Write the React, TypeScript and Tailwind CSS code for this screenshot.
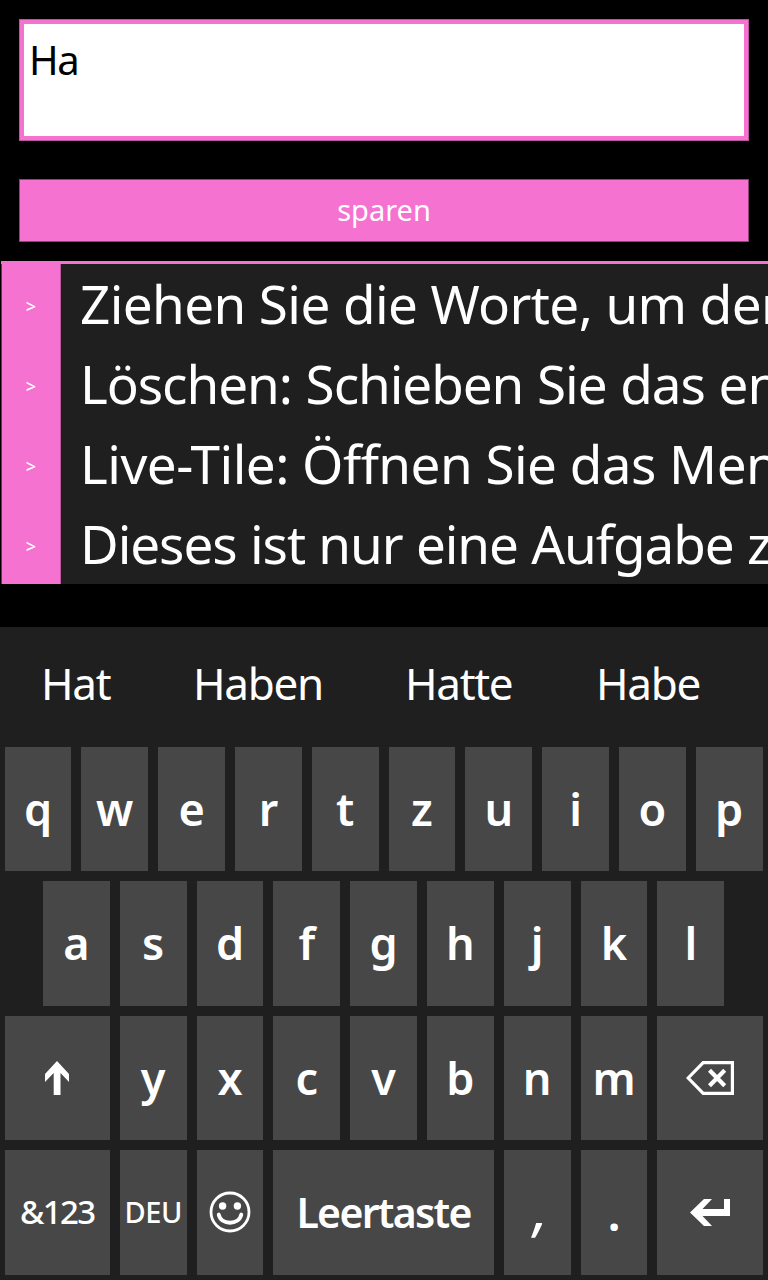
import type { ReactNode } from 'react';

const tasks = [
  { text: 'Ziehen Sie die Worte, um den', style: 'tracking-[-0.6px]' },
  { text: 'Löschen: Schieben Sie das en', style: 'tracking-[-1.05px] [word-spacing:1px]' },
  { text: 'Live-Tile: Öffnen Sie das Men', style: 'tracking-[-0.53px]' },
  { text: 'Dieses ist nur eine Aufgabe z', style: 'tracking-[-1.05px] [word-spacing:0.6px]' },
];

const suggestions = [
  { word: 'Hat', style: 'w-[152px]' },
  { word: 'Haben', style: 'w-[212px]' },
  { word: 'Hatte', style: 'w-[191px]' },
  { word: 'Habe', style: 'w-[140px]' },
];

function Key({ children, className = 'col-span-2' }: { children: ReactNode; className?: string }) {
  return (
    <button
      type="button"
      className={`flex h-full items-center justify-center whitespace-nowrap bg-[#474747] text-[45px] leading-none font-semibold text-white ${className}`}
    >
      {children}
    </button>
  );
}

function Letters({ letters }: { letters: string }) {
  return (
    <>
      {letters.split('').map((letter) => (
        <Key key={letter} className="col-span-2 pb-[2px]">
          {letter}
        </Key>
      ))}
    </>
  );
}

function ShiftIcon() {
  return (
    <svg width="24" height="34" viewBox="0 0 24 34" fill="white">
      <path d="M12 0 24 13V21L15.5 12V34H8.7V12L0 21V13Z" />
    </svg>
  );
}

function BackspaceIcon() {
  return (
    <svg width="48" height="34" viewBox="0 0 48 34" fill="none" stroke="white">
      <path d="M17.2 1.6H46.4V32.4H17.2L2.2 17Z" strokeWidth="3.2" />
      <path d="M23.5 9.2 38.7 24.8M38.7 9.2 23.5 24.8" strokeWidth="4.2" />
    </svg>
  );
}

function SmileyIcon() {
  return (
    <svg width="42" height="42" viewBox="0 0 42 42" fill="none" stroke="white">
      <circle cx="21" cy="21" r="19" strokeWidth="2.8" />
      <circle cx="13.6" cy="15" r="3.7" fill="white" stroke="none" />
      <circle cx="28.4" cy="15" r="3.7" fill="white" stroke="none" />
      <path d="M9.7 23.5C12 34.5 30 34.5 32.3 23.5" strokeWidth="3.8" strokeLinecap="round" />
    </svg>
  );
}

function EnterIcon() {
  return (
    <svg width="40" height="27" viewBox="0 0 40 27" fill="white">
      <path d="M0 13.5 14 0H22L12.5 10H34V0H40V17H12.5L22 27H14Z" />
    </svg>
  );
}

export default function App() {
  return (
    <div className="flex h-[1280px] w-[768px] flex-col overflow-hidden bg-black font-['Noto_Sans',sans-serif] text-white">
      <div className="mx-[19px] mt-[19px] h-[122px] w-[730px] border border-[#b9569e]">
        <div className="h-full border-4 border-[#f572d0] bg-white px-[5px] pt-[9px] text-[40px] leading-[54px] tracking-[-1.4px] text-black">
          Ha
        </div>
      </div>

      <button
        type="button"
        className="mx-[19px] mt-[38px] h-[63px] w-[730px] border border-[#8d4179] bg-[#f572d0] pb-[2px] text-[29px] leading-none"
      >
        sparen
      </button>

      <div className="mt-[19px] ml-px border-t-[3px] border-[#f572d0] bg-[#1f1f1f]">
        {tasks.map((task) => (
          <div key={task.text} className="flex h-20 items-center overflow-hidden">
            <div className="flex h-full w-[60px] shrink-0 items-center justify-center border-r border-l border-r-[#b9569e] border-l-[#6b3360] bg-[#f572d0] pt-[4px] text-[18px] leading-none font-medium">
              &gt;
            </div>
            <div className={`pl-[19px] text-[53px] leading-[76px] whitespace-nowrap ${task.style}`}>
              {task.text}
            </div>
          </div>
        ))}
      </div>

      <div className="mt-[43px] flex flex-1 flex-col bg-[#1f1f1f]">
        <div className="flex h-[119.8px] items-center pb-[7px] pl-[41px] text-[44px] leading-none tracking-[-1.3px]">
          {suggestions.map((item) => (
            <span key={item.word} className={`shrink-0 ${item.style}`}>
              {item.word}
            </span>
          ))}
        </div>

        <div className="flex w-[768px] flex-col gap-[10px] pr-[5.4px] pl-[4.6px]">
          <div className="grid h-[124.5px] grid-cols-20 gap-x-[10px]">
            <Letters letters="qwertzuiop" />
          </div>
          <div className="grid h-[124.5px] grid-cols-20 gap-x-[10px]">
            <span />
            <Letters letters="asdfghjkl" />
          </div>
          <div className="grid h-[124.5px] grid-cols-20 gap-x-[10px]">
            <Key className="col-span-3">
              <ShiftIcon />
            </Key>
            <Letters letters="yxcvbnm" />
            <Key className="col-span-3">
              <BackspaceIcon />
            </Key>
          </div>
          <div className="grid h-[124.5px] grid-cols-20 gap-x-[10px]">
            <Key className="col-span-3 pb-[2px]">
              <span className="text-[33px] font-medium tracking-[-1.6px]">&amp;123</span>
            </Key>
            <Key className="col-span-2 pb-[2px]">
              <span className="text-[29px] font-medium tracking-[-0.5px]">DEU</span>
            </Key>
            <Key className="col-span-2 pb-[1px]">
              <SmileyIcon />
            </Key>
            <Key className="col-span-6 pb-[1px]">
              <span className="text-[41px] tracking-[-1.7px]">Leertaste</span>
            </Key>
            <Key className="col-span-2 pb-[12px] pl-[8px]">
              <span className="inline-block -skew-x-8 text-[60px] font-normal">,</span>
            </Key>
            <Key>
              <span className="text-[48px]">.</span>
            </Key>
            <Key className="col-span-3">
              <EnterIcon />
            </Key>
          </div>
        </div>
      </div>
    </div>
  );
}
